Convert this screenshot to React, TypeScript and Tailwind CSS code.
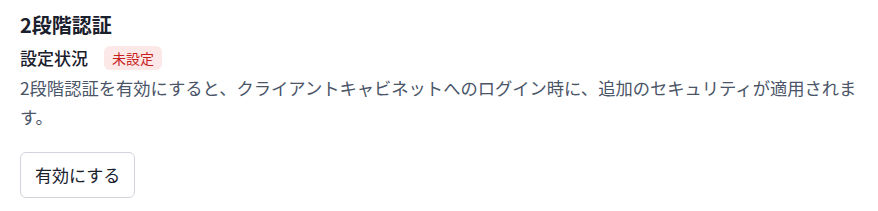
import React from "react";

export default function App() {
  return (
    <div
      className="w-[878px] h-[211px] bg-white px-5 pt-[11px]"
      style={{ fontFamily: '"Noto Sans CJK JP", "Noto Sans", sans-serif' }}
    >
      <h2 className="text-[20px] leading-[28px] font-bold text-[#1a202c]">2段階認証</h2>
      <div className="mt-[6px] flex items-center gap-4">
        <span className="text-[17px] leading-[26px] font-medium text-[#1a202c]">設定状況</span>
        <span className="rounded-md bg-[#fde8e8] px-2 py-[2px] text-[14px] leading-[20px] text-[#c81e1e]">
          未設定
        </span>
      </div>
      <p className="mt-[2px] text-[17.3px] leading-[29px] text-[#4a5568]">
        2段階認証を有効にすると、クライアントキャビネットへのログイン時に、追加のセキュリティが適用されます。
      </p>
      <button className="mt-[21px] h-[46px] rounded-md border border-[#d1d5db] bg-white px-[14px] text-[17px] text-[#1a202c]">
        有効にする
      </button>
    </div>
  );
}
